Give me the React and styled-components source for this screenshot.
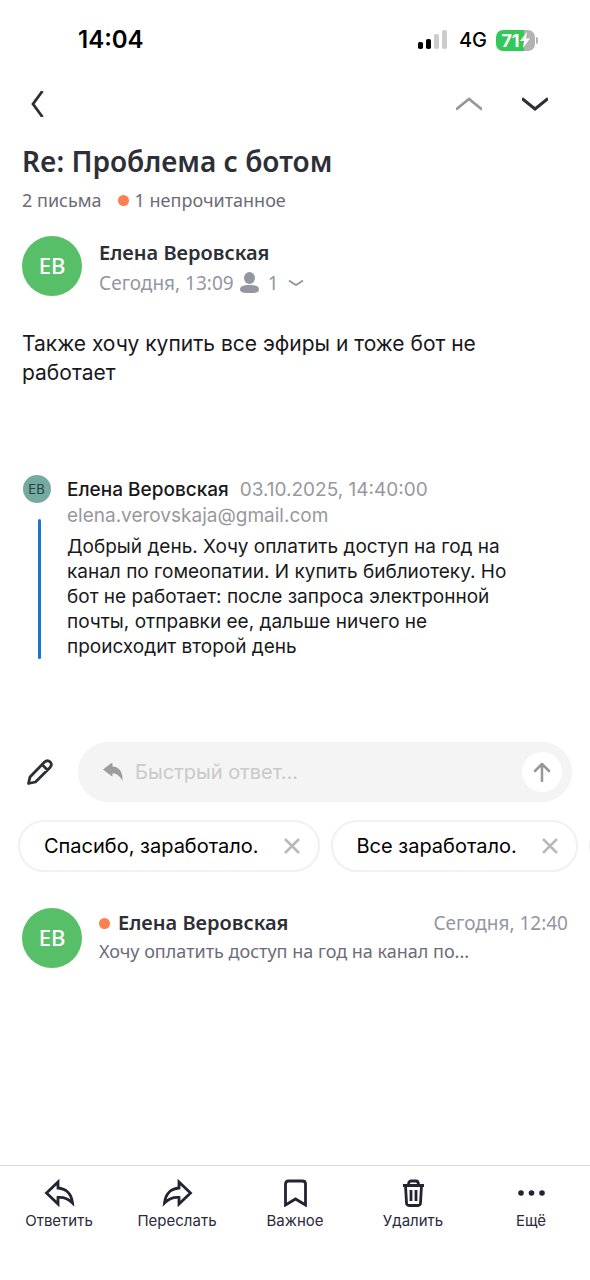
import styled, { createGlobalStyle } from "styled-components"

const system = `Inter, "Liberation Sans", sans-serif`
const brand = `"Noto Sans", "Open Sans", sans-serif`

const GlobalStyle = createGlobalStyle`
* { box-sizing: border-box; }
body {
margin: 0;
background: #ffffff;
}
h1, h2, p { margin: 0; }
button, input { font: inherit; }
`
const Page = styled.div`
display: flex;
flex-direction: column;
min-height: 100vh;
overflow-x: hidden;
font-family: ${brand};
color: #2e2f36;
`
const StatusBar = styled.header`
display: flex;
align-items: center;
justify-content: space-between;
height: 80px;
padding: 0 52px 0 78px;
font-family: ${system};
color: #000000;
`
const Time = styled.time`
font-weight: 600;
font-size: 24px;
line-height: 28px;
`
const StatusIcons = styled.div`
display: flex;
align-items: center;
gap: 9px;
`
const Network = styled.span`
font-weight: 500;
font-size: 20px;
line-height: 24px;
`
const IconButton = styled.button`
display: flex;
align-items: center;
justify-content: center;
flex: none;
width: ${(props) => props.$size || 40}px;
height: ${(props) => props.$size || 40}px;
padding: 0;
border: 0;
border-radius: 50%;
background: ${(props) => props.$fill || "transparent"};
`
const NavBar = styled.nav`
display: flex;
align-items: center;
justify-content: space-between;
height: 48px;
padding: 0 35px 0 17px;
`
const NavArrows = styled.div`
display: flex;
gap: 26px;
`
const Content = styled.main`
flex: 1;
`
const Thread = styled.section`
padding: 16px 22px 0;
`
const Title = styled.h1`
font-weight: 600;
font-size: 28px;
line-height: 34px;
`
const Counts = styled.div`
display: flex;
align-items: center;
gap: 16px;
margin-top: 10px;
font-size: 18px;
line-height: 24px;
color: #6b6c76;
`
const Unread = styled.span`
display: flex;
align-items: center;
gap: 6px;
`
const Dot = styled.span`
flex: none;
width: 11px;
height: 11px;
border-radius: 50%;
background: #fb7f50;
`
const Message = styled.article`
display: flex;
align-items: flex-start;
gap: 17px;
padding: ${(props) => props.$pad || "0"};
`
const Avatar = styled.div`
display: flex;
align-items: center;
justify-content: center;
flex: none;
width: 60px;
height: 60px;
padding-bottom: 3px;
border-radius: 50%;
background: #58bf69;
font-weight: 500;
font-size: 22px;
color: #ffffff;
`
const MessageInfo = styled.div`
flex: 1;
min-width: 0;
padding-top: ${(props) => props.$open ? "2px" : "0"};
`
const MessageTop = styled.div`
display: flex;
align-items: center;
gap: 8px;
`
const Sender = styled.h2`
flex: 1;
font-weight: 600;
font-size: 20px;
line-height: 30px;
`
const Meta = styled.div`
display: flex;
align-items: center;
gap: 6px;
font-size: 19px;
line-height: 30px;
color: #9496a1;
`
const Recipients = styled.button`
display: flex;
align-items: center;
gap: 9px;
padding: 0;
border: 0;
background: transparent;
color: inherit;
`
const Preview = styled.p`
overflow: hidden;
font-size: 18px;
line-height: 26px;
color: #6b6c76;
`
const Body = styled.p`
max-width: 500px;
margin-top: 31px;
font-family: ${system};
font-size: 21px;
line-height: 29px;
color: #19191b;
`
const Quote = styled.blockquote`
display: flex;
gap: 16px;
margin: 88px 0 0;
font-family: ${system};
font-size: 19px;
line-height: 26px;
color: #19191b;
`
const QuoteSide = styled.div`
display: flex;
flex-direction: column;
align-items: center;
flex: none;
gap: 16px;
width: 29px;
`
const QuoteAvatar = styled.div`
display: flex;
align-items: center;
justify-content: center;
flex: none;
width: 28px;
height: 28px;
border-radius: 50%;
background: #75aaa2;
font-size: 13px;
color: #24403c;
`
const QuoteLine = styled.div`
flex: 1;
width: 3px;
margin-left: 5px;
border-radius: 2px;
background: #1976c8;
`
const QuoteInfo = styled.div`
flex: 1;
max-width: 450px;
padding-top: 2px;
`
const QuoteTop = styled.div`
display: flex;
gap: 11px;
`
const QuoteName = styled.span`
font-weight: 500;
`
const Muted = styled.div`
color: #98989d;
`
const QuoteText = styled.p`
margin-top: 5px;
line-height: 25px;
`
const ReplyRow = styled.form`
display: flex;
align-items: center;
gap: 18px;
margin-top: 83px;
padding: 0 18px 0 20px;
`
const ReplyBox = styled.label`
display: flex;
align-items: center;
flex: 1;
gap: 11px;
height: 60px;
padding: 0 10px 0 24px;
border-radius: 30px;
background: #f4f4f4;
`
const ReplyInput = styled.input`
flex: 1;
min-width: 0;
padding: 0;
border: 0;
outline: 0;
background: transparent;
font-family: ${system};
font-size: 20px;
color: #19191b;
&::placeholder { color: #c9c9cb; opacity: 1; }
`
const Chips = styled.div`
display: flex;
gap: 11px;
margin-top: 18px;
padding-left: 18px;
overflow: hidden;
`
const Chip = styled.div`
display: flex;
align-items: center;
flex: none;
gap: 17px;
height: 52px;
min-width: 100px;
padding: 0 10px 0 24px;
border: 2px solid #f1f1f1;
border-radius: 26px;
`
const ChipText = styled.button`
padding: 0;
border: 0;
background: transparent;
font-family: ${system};
font-size: 20px;
line-height: 28px;
color: #000000;
`
const TabBar = styled.footer`
display: grid;
grid-template-columns: repeat(5, 1fr);
height: 115px;
padding-top: 13px;
border-top: 1px solid #dcdddf;
`
const Tab = styled.button`
display: flex;
flex-direction: column;
align-items: center;
gap: 2px;
padding: 0;
border: 0;
background: transparent;
font-family: ${system};
font-size: 15px;
line-height: 24px;
color: #2b2a3a;
`

const Stroke = ({ w, h, d, width = 3, color = "#2e2f36", cap = "butt", join = "miter" }) => (
    <svg width={w} height={h} viewBox={`0 0 ${w} ${h}`} fill="none" stroke={color} strokeWidth={width} strokeLinecap={cap} strokeLinejoin={join} aria-hidden="true">
        <path d={d} />
    </svg>
)

const Signal = () => (
    <svg width="32" height="20" viewBox="0 0 32 20" aria-hidden="true">
        <rect x="0" y="12" width="5" height="7" rx="1.8" fill="#000" />
        <rect x="8" y="9" width="5" height="10" rx="1.8" fill="#000" />
        <rect x="16" y="4" width="5" height="15" rx="1.8" fill="#ccc" />
        <rect x="24" y="0" width="5" height="19" rx="1.8" fill="#ccc" />
    </svg>
)

const BatteryShell = styled.div`
display: flex;
align-items: center;
gap: 1px;
`
const BatteryBody = styled.div`
display: flex;
align-items: center;
justify-content: center;
width: 39px;
height: 21px;
border-radius: 7px;
background: linear-gradient(to right, #34c759 71%, #b3b3b3 71%);
font-weight: 700;
font-size: 18px;
line-height: 21px;
color: #ffffff;
`
const BatteryCap = styled.div`
width: 2px;
height: 7px;
border-radius: 0 2px 2px 0;
background: #b3b3b3;
`

const tabs = [
    { label: "Ответить", d: "M2.500 14 14 3V9C22 9.500 27.500 15 28.500 24C24 19.500 20 18 14 18.500V25Z" },
    { label: "Переслать", d: "M28.500 14 17 3V9C9 9.500 3.500 15 2.500 24C7 19.500 11 18 17 18.500V25Z" },
    { label: "Важное", d: "M5.500 26V5Q5.500 2 8.500 2H22.500Q25.500 2 25.500 5V26L15.500 20Z" },
    { label: "Удалить", d: "M5 6.500H26M10.500 6Q10.500 2 13 2H18Q20.500 2 20.500 6M7.500 6.500 8.500 24Q8.700 26.500 11 26.500H20Q22.300 26.500 22.500 24L23.500 6.500M13 11V22M18 11V22" },
    { label: "Ещё" },
]

const chips = ["Спасибо, заработало.", "Все заработало."]

const App = () => {
    return (
        <Page>
            <GlobalStyle />
            <StatusBar>
                <Time>14:04</Time>
                <StatusIcons>
                    <Signal />
                    <Network>4G</Network>
                    <BatteryShell>
                        <BatteryBody>
                            71
                            <svg width="10" height="16" viewBox="0 0 10 16" fill="#fff" aria-hidden="true">
                                <path d="M7 0 0 9H4L3 16 10 6.500H6Z" />
                            </svg>
                        </BatteryBody>
                        <BatteryCap />
                    </BatteryShell>
                </StatusIcons>
            </StatusBar>
            <NavBar>
                <IconButton aria-label="Назад">
                    <Stroke w={14} h={26} d="M12.500 0 3 13 12.500 26" width={2.8} />
                </IconButton>
                <NavArrows>
                    <IconButton aria-label="Предыдущее">
                        <Stroke w={26} h={16} d="M0 13.500 13 3 26 13.500" width={2.8} color="#97979b" />
                    </IconButton>
                    <IconButton aria-label="Следующее">
                        <Stroke w={26} h={16} d="M0 2.500 13 13 26 2.500" width={3} />
                    </IconButton>
                </NavArrows>
            </NavBar>
            <Content>
                <Thread>
                    <Title>Re: Проблема с ботом</Title>
                    <Counts>
                        <span>2 письма</span>
                        <Unread><Dot />1 непрочитанное</Unread>
                    </Counts>
                    <Message $pad="24px 0 0">
                        <Avatar>ЕВ</Avatar>
                        <MessageInfo $open>
                            <Sender>Елена Веровская</Sender>
                            <Meta>
                                <time>Сегодня, 13:09</time>
                                <Recipients aria-label="Получатели">
                                    <svg width="19" height="22" viewBox="0 0 19 22" fill="#9496a1" aria-hidden="true">
                                        <ellipse cx="9.500" cy="6" rx="5.500" ry="6" />
                                        <path d="M0 17.500C0 14 4 13 9.500 13S19 14 19 17.500 15 21 9.500 21 0 20.500 0 17.500Z" />
                                    </svg>
                                    1
                                    <Stroke w={16} h={8} d="M1 1.500 7 5.500Q8 6.200 9 5.500L15 1.500" width={2} color="#9496a1" />
                                </Recipients>
                            </Meta>
                        </MessageInfo>
                    </Message>
                    <Body>Также хочу купить все эфиры и тоже бот не работает</Body>
                    <Quote>
                        <QuoteSide>
                            <QuoteAvatar>ЕВ</QuoteAvatar>
                            <QuoteLine />
                        </QuoteSide>
                        <QuoteInfo>
                            <QuoteTop>
                                <QuoteName>Елена Веровская</QuoteName>
                                <Muted>03.10.2025, 14:40:00</Muted>
                            </QuoteTop>
                            <Muted>elena.verovskaja@gmail.com</Muted>
                            <QuoteText>
                                Добрый день. Хочу оплатить доступ на год на канал по гомеопатии. И купить библиотеку. Но бот не работает: после запроса электронной почты, отправки ее, дальше ничего не происходит второй день
                            </QuoteText>
                        </QuoteInfo>
                    </Quote>
                </Thread>
                <ReplyRow onSubmit={(e) => e.preventDefault()}>
                    <IconButton type="button" aria-label="Написать">
                        <svg width="28" height="28" viewBox="0 0 28 28" fill="none" stroke="#2e2f36" strokeWidth="2.800" strokeLinejoin="round" aria-hidden="true">
                            <path d="M2.500 25.500 4 19 18.500 4Q21.500 1.500 24.300 4 26.500 6.800 24 9.500L9.500 24ZM16 6.500 21.500 12" />
                        </svg>
                    </IconButton>
                    <ReplyBox>
                        <svg width="22" height="20" viewBox="0 0 22 20" fill="#9d9d9f" aria-hidden="true">
                            <path d="M1 7.500 9.500 1Q10.500 .5 10.500 2V4.500C17 5 21 9 20.500 19C18 14 15 11.500 10.500 11.500V13.500Q10.500 15 9.500 14Z" />
                        </svg>
                        <ReplyInput placeholder="Быстрый ответ..." aria-label="Быстрый ответ" />
                        <IconButton type="submit" $fill="#ffffff" aria-label="Отправить">
                            <Stroke w={18} h={20} d="M9 19V2M2 9 9 2 16 9" width={2.5} color="#97979a" cap="round" join="round" />
                        </IconButton>
                    </ReplyBox>
                </ReplyRow>
                <Chips>
                    {
                        chips.map((text) => (
                            <Chip key={text}>
                                <ChipText>{text}</ChipText>
                                <IconButton $size={32} aria-label="Убрать">
                                    <Stroke w={16} h={16} d="M1 1 15 15M15 1 1 15" width={2.5} color="#b9b9bb" />
                                </IconButton>
                            </Chip>
                        ))
                    }
                    <Chip aria-hidden="true" />
                </Chips>
                <Message $pad="36px 22px 0">
                    <Avatar>ЕВ</Avatar>
                    <MessageInfo>
                        <MessageTop>
                            <Dot />
                            <Sender>Елена Веровская</Sender>
                            <Meta as="time">Сегодня, 12:40</Meta>
                        </MessageTop>
                        <Preview>Хочу оплатить доступ на год на канал по...</Preview>
                    </MessageInfo>
                </Message>
            </Content>
            <TabBar>
                {
                    tabs.map((tab) => (
                        <Tab key={tab.label}>
                            {tab.d ? (
                                <Stroke w={31} h={28} d={tab.d} width={2.8} color="#242334" />
                            ) : (
                                <svg width="31" height="28" viewBox="0 0 31 28" fill="#242334" aria-hidden="true">
                                    <circle cx="5" cy="14" r="2.800" />
                                    <circle cx="15.500" cy="14" r="2.800" />
                                    <circle cx="26" cy="14" r="2.800" />
                                </svg>
                            )}
                            {tab.label}
                        </Tab>
                    ))
                }
            </TabBar>
        </Page>
    )
}

export default App
